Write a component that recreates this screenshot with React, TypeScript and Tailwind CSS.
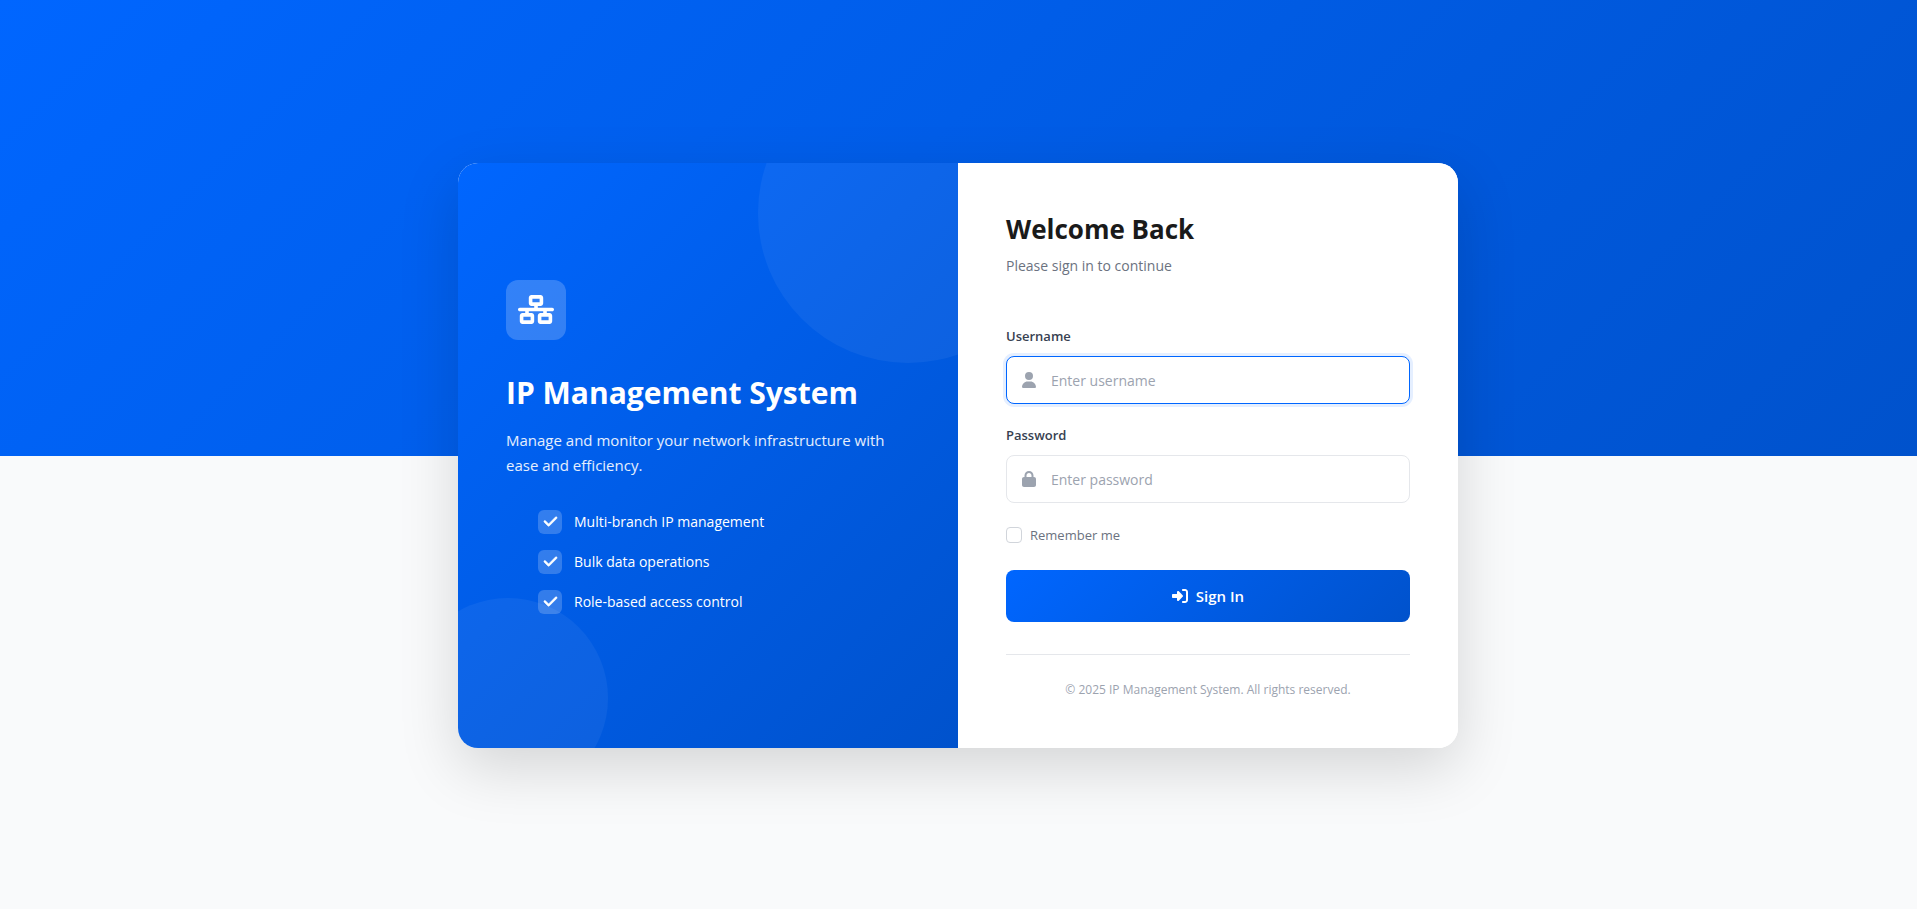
import type { ReactNode } from "react";
import {
  FaCheck,
  FaLock,
  FaNetworkWired,
  FaRightToBracket,
  FaUser,
} from "react-icons/fa6";

const features = [
  "Multi-branch IP management",
  "Bulk data operations",
  "Role-based access control",
];

type FieldProps = {
  id: string;
  label: string;
  type: string;
  placeholder: string;
  icon: ReactNode;
  active?: boolean;
};

function Field({ id, label, type, placeholder, icon, active }: FieldProps) {
  return (
    <div>
      <label
        htmlFor={id}
        className="mb-2.5 block text-[13px] leading-5 font-semibold text-[#374151]"
      >
        {label}
      </label>
      <div
        className={
          active
            ? "flex h-12 items-center gap-[15px] rounded-lg border border-[#0066ff] bg-white px-[15px] ring-3 ring-[#0066ff]/10"
            : "flex h-12 items-center gap-[15px] rounded-lg border border-[#e5e7eb] bg-white px-[15px]"
        }
      >
        <span className="text-base text-[#9ca3af]">{icon}</span>
        <input
          id={id}
          type={type}
          placeholder={placeholder}
          className="min-w-0 flex-1 bg-transparent pt-0.5 text-sm text-[#1a1a1a] outline-none placeholder:text-[#9ca3af]"
        />
      </div>
    </div>
  );
}

export default function App() {
  return (
    <div className="relative isolate flex min-h-screen items-center justify-center bg-[#f9fafb] pt-0.5 pr-px font-['Open_Sans','Noto_Sans',sans-serif]">
      <div className="absolute inset-x-0 top-0 -z-10 h-[calc(50%+1px)] bg-[linear-gradient(135deg,#0066ff_0%,#0052cc_100%)]" />

      <main className="grid w-full max-w-[1000px] grid-cols-2 overflow-hidden rounded-[20px] bg-white shadow-[0_20px_60px_rgba(0,0,0,0.15)]">
        <section className="relative isolate flex flex-col justify-center overflow-hidden bg-[linear-gradient(135deg,#0066ff_0%,#0052cc_100%)] p-12 text-white">
          <div className="absolute -top-[100px] -right-[100px] -z-10 size-[300px] rounded-full bg-white/5" />
          <div className="absolute -bottom-[50px] -left-[50px] -z-10 size-[200px] rounded-full bg-white/5" />

          <div className="flex size-[60px] items-center justify-center rounded-xl bg-white/20">
            <FaNetworkWired className="h-[29px] w-9" />
          </div>
          <h1 className="mt-[33px] text-[30px] leading-10 font-bold">IP Management System</h1>
          <p className="mt-[15px] text-[15px] leading-[25px] text-white/90">
            Manage and monitor your network infrastructure with ease and efficiency.
          </p>
          <ul className="mt-8 mb-[18px] flex flex-col gap-4 pl-8">
            {features.map((feature) => (
              <li key={feature} className="flex items-center gap-3 text-sm leading-6 text-white">
                <span className="flex size-6 items-center justify-center rounded-md bg-white/20">
                  <FaCheck className="size-[15px] stroke-current [stroke-width:20]" />
                </span>
                {feature}
              </li>
            ))}
          </ul>
        </section>

        <section className="bg-white p-12">
          <h2 className="text-[26px] leading-9 font-bold text-[#1a1a1a]">Welcome Back</h2>
          <p className="mt-[7px] text-sm leading-6 text-[#6b7280]">Please sign in to continue</p>

          <form className="mt-12" onSubmit={(event) => event.preventDefault()}>
            <div className="flex flex-col gap-[21px]">
              <Field
                id="username"
                label="Username"
                type="text"
                placeholder="Enter username"
                icon={<FaUser className="h-4 w-3.5" />}
                active
              />
              <Field
                id="password"
                label="Password"
                type="password"
                placeholder="Enter password"
                icon={<FaLock className="h-4 w-3.5" />}
              />
            </div>

            <div className="mt-6 flex items-center gap-2">
              <input
                id="remember"
                type="checkbox"
                className="size-4 appearance-none rounded border border-[#d1d5db] bg-white checked:border-[#0066ff] checked:bg-[#0066ff]"
              />
              <label htmlFor="remember" className="text-[13px] leading-4 text-[#6b7280]">
                Remember me
              </label>
            </div>

            <button
              type="submit"
              className="mt-[27px] flex h-[52px] w-full items-center justify-center gap-2 rounded-lg bg-[linear-gradient(135deg,#0066ff_0%,#0052cc_100%)] text-[15px] font-semibold text-white"
            >
              <FaRightToBracket className="size-4" />
              Sign In
            </button>
          </form>

          <footer className="mt-8 border-t border-[#e5e7eb] pt-6 text-center text-xs leading-[21px] text-[#9ca3af]">
            © 2025 IP Management System. All rights reserved.
          </footer>
        </section>
      </main>
    </div>
  );
}
